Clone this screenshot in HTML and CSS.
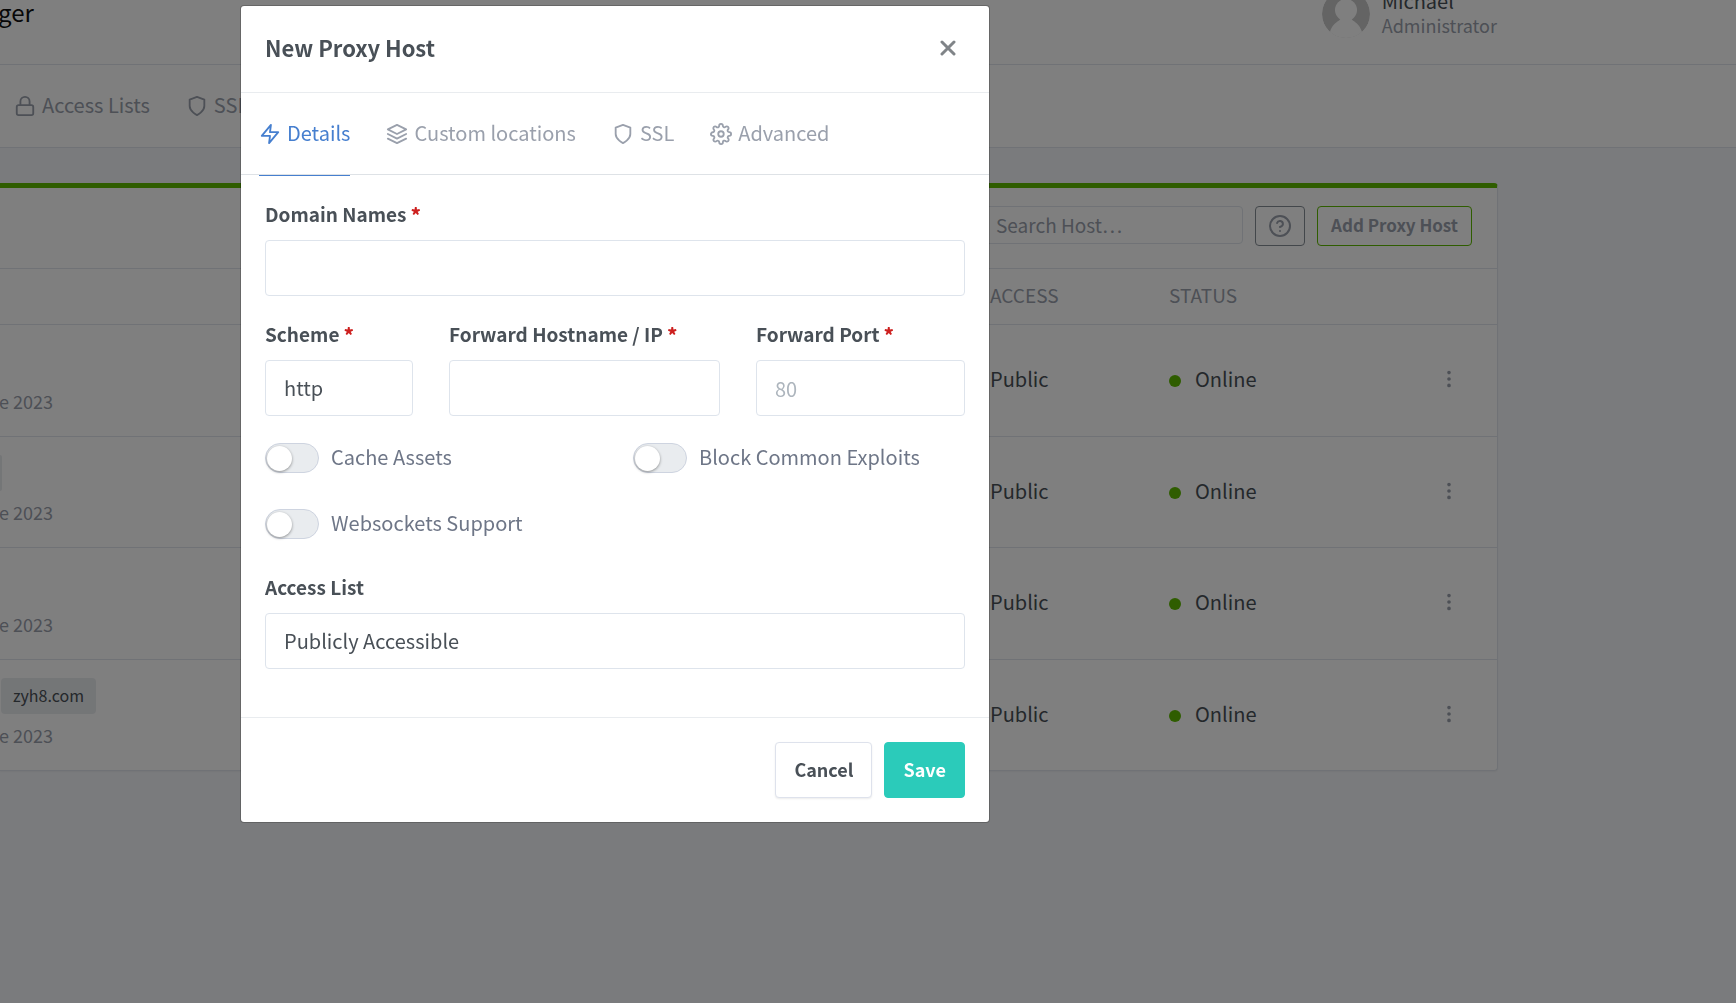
FILE: index.html
```html
<!DOCTYPE html>
<html lang="en">
<head>
<meta charset="utf-8">
<title>Proxy Hosts</title>
<link rel="stylesheet" href="styles.css">
</head>
<body>
<svg class="sprite" aria-hidden="true">
  <symbol id="lock" viewBox="0 0 24 24"><rect x="3" y="11" width="18" height="11" rx="2"/><path d="M7 11V7a5 5 0 0 1 10 0v4"/></symbol>
  <symbol id="shield" viewBox="0 0 24 24"><path d="M12 22s8-4 8-10V5l-8-3-8 3v7c0 6 8 10 8 10z"/></symbol>
  <symbol id="zap" viewBox="0 0 24 24"><path d="M13 2 3 14h9l-1 8 10-12h-9l1-8z"/></symbol>
  <symbol id="layers" viewBox="0 0 24 24"><path d="M12 2 2 7l10 5 10-5-10-5zM2 17l10 5 10-5M2 12l10 5 10-5"/></symbol>
  <symbol id="settings" viewBox="0 0 24 24"><circle cx="12" cy="12" r="3"/><path d="M19.4 15a1.65 1.65 0 0 0 .33 1.82l.06.06a2 2 0 0 1 0 2.83 2 2 0 0 1-2.83 0l-.06-.06a1.65 1.65 0 0 0-1.82-.33 1.65 1.65 0 0 0-1 1.51V21a2 2 0 0 1-2 2 2 2 0 0 1-2-2v-.09A1.65 1.65 0 0 0 9 19.4a1.65 1.65 0 0 0-1.82.33l-.06.06a2 2 0 0 1-2.83 0 2 2 0 0 1 0-2.83l.06-.06a1.65 1.65 0 0 0 .33-1.82 1.65 1.65 0 0 0-1.51-1H3a2 2 0 0 1-2-2 2 2 0 0 1 2-2h.09A1.65 1.65 0 0 0 4.6 9a1.65 1.65 0 0 0-.33-1.82l-.06-.06a2 2 0 0 1 0-2.83 2 2 0 0 1 2.83 0l.06.06a1.65 1.65 0 0 0 1.82.33H9a1.65 1.65 0 0 0 1-1.51V3a2 2 0 0 1 2-2 2 2 0 0 1 2 2v.09a1.65 1.65 0 0 0 1 1.51 1.65 1.65 0 0 0 1.82-.33l.06-.06a2 2 0 0 1 2.83 0 2 2 0 0 1 0 2.83l-.06.06a1.65 1.65 0 0 0-.33 1.82V9a1.65 1.65 0 0 0 1.51 1H21a2 2 0 0 1 2 2 2 2 0 0 1-2 2h-.09a1.65 1.65 0 0 0-1.51 1z"/></symbol>
  <symbol id="help" viewBox="0 0 24 24"><circle cx="12" cy="12" r="10"/><path d="M9.09 9a3 3 0 0 1 5.83 1c0 2-3 3-3 3M12 17v.01"/></symbol>
  <symbol id="more" viewBox="0 0 24 24"><circle cx="12" cy="5" r="1"/><circle cx="12" cy="12" r="1"/><circle cx="12" cy="19" r="1"/></symbol>
</svg>

<div class="page">
  <header class="header">
    <span class="brand">ger</span>
    <div class="user">
      <svg class="avatar" viewBox="0 0 48 48" aria-hidden="true"><circle cx="24" cy="24" r="24" fill="#c8c8c8"/><circle cx="24" cy="20" r="11" fill="#fff"/><path fill="#fff" d="M19 27c0 5-8 4-11 15v6h32v-6c-3-11-11-10-11-15z"/></svg>
      <div class="who"><span class="name">Michael</span><span class="role">Administrator</span></div>
    </div>
  </header>
  <nav class="nav">
    <a href="#"><svg class="icon"><use href="#lock"/></svg>Access Lists</a>
    <a href="#"><svg class="icon"><use href="#shield"/></svg>SSL</a>
  </nav>
  <main class="card">
    <div class="card-header">
      <input class="search" type="search" placeholder="Search Host…" aria-label="Search Host">
      <button class="btn-sm" type="button" aria-label="Help"><svg class="icon icon-lg"><use href="#help"/></svg></button>
      <button class="btn-sm btn-add" type="button">Add Proxy Host</button>
    </div>
    <table class="hosts">
      <thead><tr><th></th><th class="c-access">ACCESS</th><th class="c-status">STATUS</th><th class="c-menu"></th></tr></thead>
      <tbody>
        <tr><td><div class="tags"></div><div class="created">e 2023</div></td><td>Public</td><td><span class="dot"></span>Online</td><td><button class="more" type="button" aria-label="Actions"><svg class="icon"><use href="#more"/></svg></button></td></tr>
        <tr><td><div class="tags"><span class="tag tag-end"></span></div><div class="created">e 2023</div></td><td>Public</td><td><span class="dot"></span>Online</td><td><button class="more" type="button" aria-label="Actions"><svg class="icon"><use href="#more"/></svg></button></td></tr>
        <tr><td><div class="tags"></div><div class="created">e 2023</div></td><td>Public</td><td><span class="dot"></span>Online</td><td><button class="more" type="button" aria-label="Actions"><svg class="icon"><use href="#more"/></svg></button></td></tr>
        <tr><td><div class="tags"><span class="tag">zyh8.com</span></div><div class="created">e 2023</div></td><td>Public</td><td><span class="dot"></span>Online</td><td><button class="more" type="button" aria-label="Actions"><svg class="icon"><use href="#more"/></svg></button></td></tr>
      </tbody>
    </table>
  </main>
</div>

<div class="backdrop">
  <form class="modal" role="dialog" aria-labelledby="modal-title">
    <div class="modal-header">
      <h1 id="modal-title">New Proxy Host</h1>
      <button class="close" type="button" aria-label="Close"><svg viewBox="0 0 16 16"><path d="M2 2l12 12M14 2 2 14"/></svg></button>
    </div>
    <div class="tabs">
      <a class="active" href="#details"><svg class="icon"><use href="#zap"/></svg>Details</a>
      <a href="#locations"><svg class="icon"><use href="#layers"/></svg>Custom locations</a>
      <a href="#ssl"><svg class="icon"><use href="#shield"/></svg>SSL</a>
      <a href="#advanced"><svg class="icon"><use href="#settings"/></svg>Advanced</a>
    </div>
    <div class="modal-body">
      <div class="field">
        <label for="domains">Domain Names <b>*</b></label>
        <input id="domains" type="text">
      </div>
      <div class="forward">
        <div class="field"><label for="scheme">Scheme <b>*</b></label><select id="scheme"><option>http</option><option>https</option></select></div>
        <div class="field"><label for="host">Forward Hostname / IP <b>*</b></label><input id="host" type="text"></div>
        <div class="field"><label for="port">Forward Port <b>*</b></label><input id="port" type="text" placeholder="80"></div>
      </div>
      <div class="switches">
        <label class="switch"><input type="checkbox"><span>Cache Assets</span></label>
        <label class="switch"><input type="checkbox"><span>Block Common Exploits</span></label>
        <label class="switch"><input type="checkbox"><span>Websockets Support</span></label>
      </div>
      <div class="field">
        <label for="access">Access List</label>
        <select id="access"><option>Publicly Accessible</option></select>
      </div>
    </div>
    <div class="modal-footer">
      <button class="btn" type="button">Cancel</button>
      <button class="btn btn-save" type="submit">Save</button>
    </div>
  </form>
</div>
</body>
</html>
```
FILE: styles.css
```css
* { box-sizing: border-box; }

body {
  margin: 0;
  min-height: 100vh;
  overflow: hidden;
  background: #f5f7fb;
  color: #495057;
  font: 20px/32px "Noto Sans CJK SC", "Noto Sans", sans-serif;
}

button, input, select { font: inherit; color: inherit; }
button { cursor: pointer; }
a { color: inherit; text-decoration: none; }

.sprite { display: none; }

.icon {
  width: 22px;
  height: 22px;
  flex: none;
  fill: none;
  stroke: currentColor;
  stroke-width: 2;
  stroke-linecap: round;
  stroke-linejoin: round;
}
.icon-lg { width: 24px; height: 24px; margin-top: 2px; }

/* Page behind the dialog, scrolled down a little */
.page { margin-top: -36px; }

.header {
  display: flex;
  align-items: center;
  justify-content: space-between;
  height: 101px;
  padding-right: 239px;
  background: #fff;
  border-bottom: 1px solid #e0e5ec;
}
.brand { margin-left: -2px; padding-bottom: 4px; color: #111; font-size: 24px; }
.user { display: flex; align-items: center; gap: 12px; }
.avatar { width: 48px; height: 48px; border-radius: 50%; }
.who { display: flex; flex-direction: column; padding-bottom: 2px; line-height: 25px; }
.role { color: #9aa0ac; font-size: 18px; }

.nav {
  display: flex;
  align-items: center;
  gap: 36px;
  height: 83px;
  padding: 0 0 2px 14px;
  background: #fff;
  border-bottom: 1px solid #e0e5ec;
  color: #9aa0ac;
}
.nav a, .tabs a { display: flex; align-items: center; gap: 6px; }
.nav .icon, .tabs .icon { margin-top: 2px; }

.card {
  margin: 35px 238px 0 0;
  background: #fff;
  border: 1px solid #e0e5ec;
  border-top: 5px solid #5eba00;
  border-left: 0;
  border-radius: 0 4px 4px 0;
  box-shadow: 0 1px 2px rgba(0, 0, 0, .05);
}
.card-header {
  display: flex;
  justify-content: flex-end;
  align-items: flex-start;
  gap: 12px;
  padding: 18px 25px 22px;
  border-bottom: 1px solid #e0e5ec;
}
.search {
  width: 260px;
  height: 38px;
  padding: 0 12px 2px;
  background: #fff;
  border: 1px solid #e0e5ec;
  border-radius: 4px;
  font-size: 19px;
}
.search::placeholder { color: #9aa0ac; opacity: 1; }
.btn-sm {
  display: flex;
  align-items: center;
  justify-content: center;
  height: 40px;
  padding: 0 12px 2px;
  background: #fff;
  border: 1px solid #868e96;
  border-radius: 4px;
  color: #9aa0ac;
  font-size: 17px;
  font-weight: 700;
}
.btn-add { padding: 0 13px 2px; border-color: #5eba00; }

.hosts { width: 100%; table-layout: fixed; border-collapse: collapse; }
.hosts th {
  height: 55px;
  padding: 0 0 2px;
  text-align: left;
  color: #9aa0ac;
  font-size: 19px;
  font-weight: 400;
}
.c-access { width: 179px; }
.c-status { width: 256px; }
.c-menu { width: 72px; }
.hosts td { height: 112px; padding: 0 0 2px; border-top: 1px solid #e0e5ec; }
.hosts tr:nth-child(even) td { height: 111px; }
.tags { display: flex; height: 36px; margin-bottom: 7px; }
.tag {
  height: 36px;
  margin-left: 1px;
  padding: 0 12px;
  background: #e9ecef;
  border-radius: 4px;
  font-size: 16px;
  line-height: 34px;
}
.tag-end { width: 2px; margin-left: 0; padding: 0; border-radius: 0 4px 4px 0; }
.created { margin-left: -1px; color: #9aa0ac; font-size: 18px; line-height: 28px; }
.dot {
  display: inline-block;
  width: 12px;
  height: 12px;
  margin-right: 14px;
  background: #5eba00;
  border-radius: 50%;
}
.more { display: flex; margin-left: 13px; padding: 0; background: none; border: 0; color: #9aa0ac; }

/* Dialog */
.backdrop {
  position: fixed;
  inset: 0;
  padding: 5px 0 0 240px;
  background: rgba(0, 0, 0, .5);
}
.modal {
  width: 750px;
  background: #fff;
  background-clip: padding-box;
  border: 1px solid rgba(0, 0, 0, .2);
  border-radius: 4px;
}
.modal-header {
  display: flex;
  align-items: center;
  justify-content: space-between;
  height: 87px;
  padding: 0 24px 2px;
  border-bottom: 1px solid #e9ecef;
}
.modal-header h1 { margin: 0; padding-bottom: 2px; font-size: 22px; line-height: 32px; }
.close { display: flex; padding: 9px; background: none; border: 0; color: #808488; }
.close svg { width: 16px; height: 16px; fill: none; stroke: currentColor; stroke-width: 3; stroke-linecap: round; }

.tabs {
  display: flex;
  gap: 36px;
  height: 82px;
  padding: 0 18px;
  border-bottom: 1px solid #dee2e6;
  color: #9aa0ac;
}
.tabs a { margin-bottom: -2px; padding: 24px 0 28px; }
.tabs .active { padding-bottom: 27px; color: #467fcf; border-bottom: 1px solid #467fcf; }

.modal-body { padding: 25px 24px 48px; }
.field { display: flex; flex-direction: column; gap: 12px; min-width: 0; }
.field label { font-size: 19px; font-weight: 700; line-height: 28px; }
.field b { color: #cd201f; }
.field input, .field select {
  appearance: none;
  width: 100%;
  height: 56px;
  padding: 0 18px;
  background: #fff;
  border: 1px solid #dee4ec;
  border-radius: 4px;
}
.field input::placeholder { color: #adb5bd; opacity: 1; }
.forward {
  display: grid;
  grid-template-columns: 148fr 271fr 209fr;
  gap: 36px;
  margin-top: 24px;
}
.switches {
  display: grid;
  grid-template-columns: 1fr 1fr;
  gap: 36px;
  margin: 27px 0 34px;
}
.switch { display: flex; align-items: center; gap: 12px; height: 30px; color: #6e7687; }
.switch span { padding-bottom: 2px; }
.switch input {
  appearance: none;
  display: flex;
  align-items: center;
  width: 54px;
  height: 30px;
  margin: 0;
  padding: 1px;
  background: #e9ecef;
  border: 1px solid #ced4e0;
  border-radius: 15px;
}
.switch input::before {
  content: "";
  width: 25px;
  height: 25px;
  background: #fff;
  border-radius: 50%;
  box-shadow: 0 1px 3px rgba(0, 0, 0, .4);
}

.modal-footer {
  display: flex;
  justify-content: flex-end;
  gap: 12px;
  padding: 24px;
  border-top: 1px solid #e9ecef;
}
.btn {
  height: 56px;
  padding: 0 18px 2px;
  background: #fff;
  border: 1px solid #dee2ec;
  border-radius: 4px;
  box-shadow: 0 1px 2px rgba(0, 0, 0, .08);
  font-size: 18px;
  font-weight: 700;
}
.btn-save { background: #2bcbba; border-color: #2bcbba; box-shadow: none; color: #fff; }
```
